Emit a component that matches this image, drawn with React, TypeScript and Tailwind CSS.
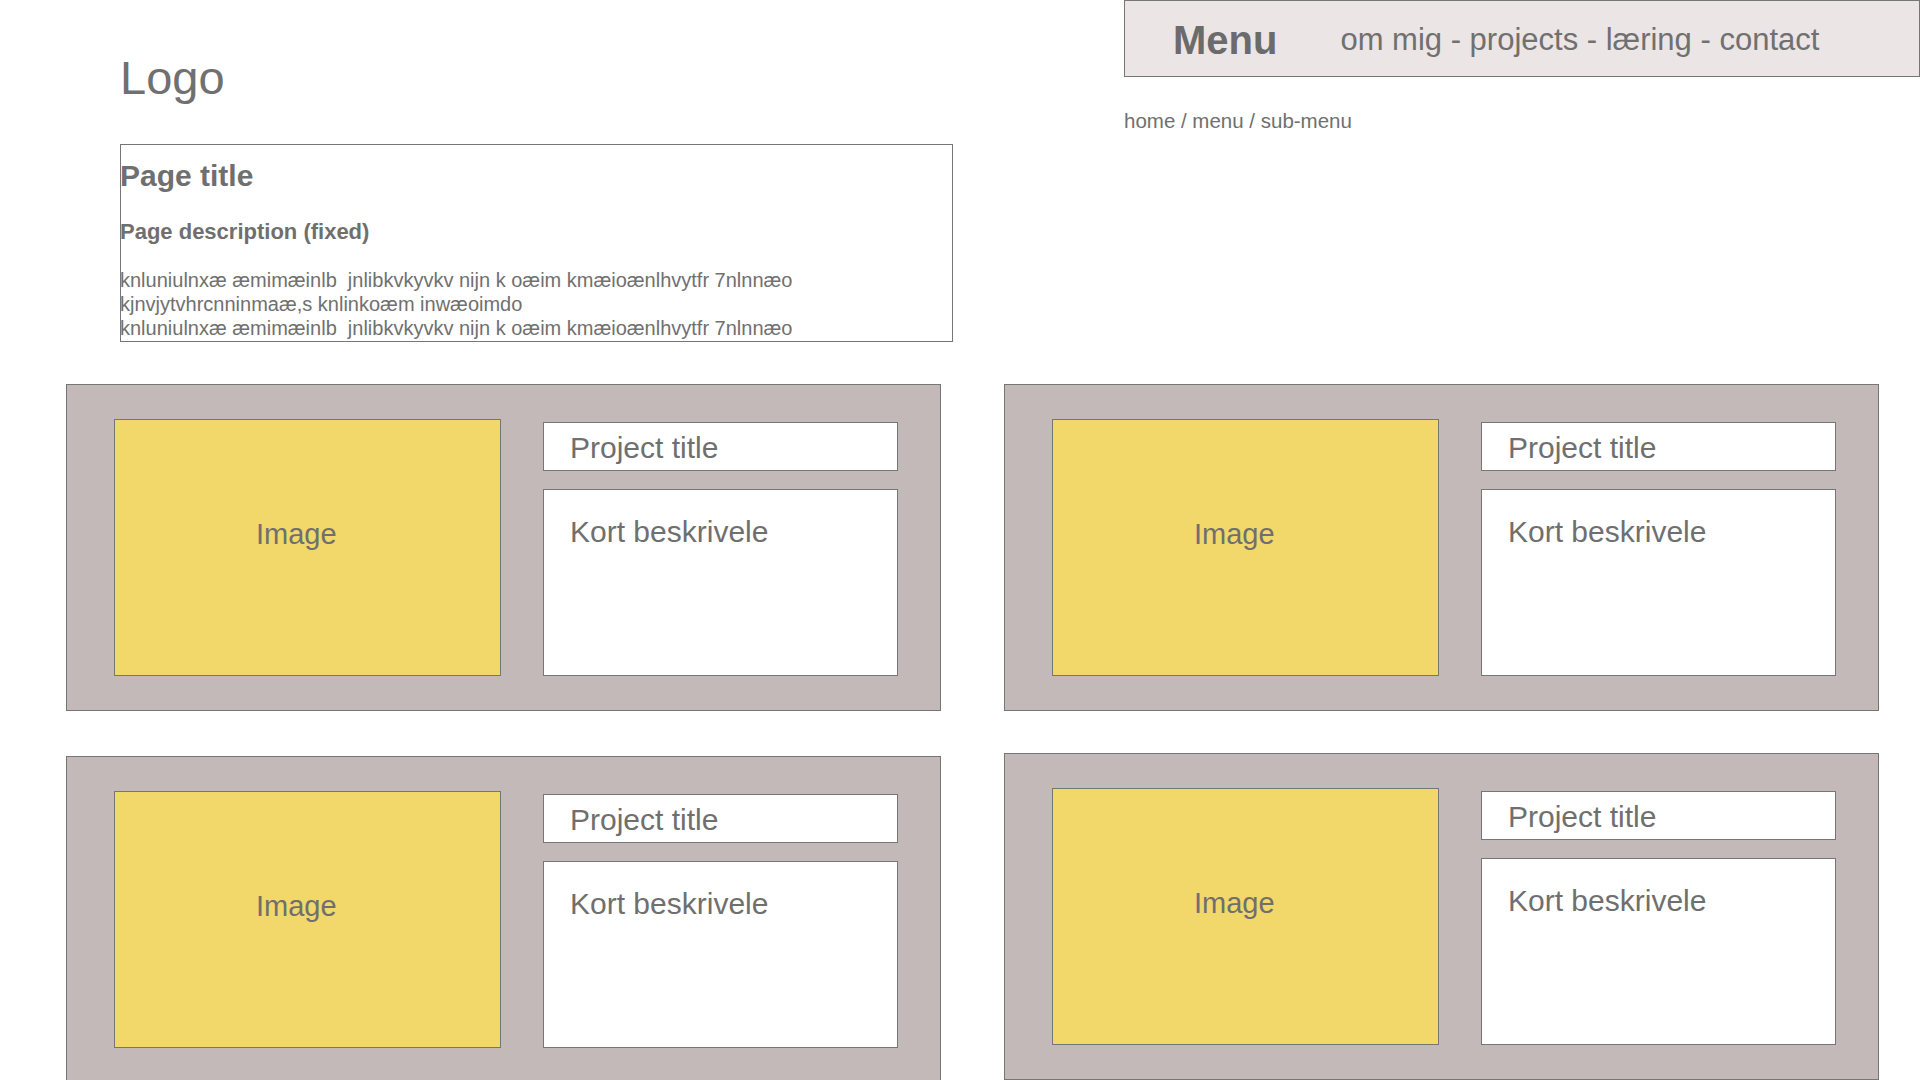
import React from "react";

const font = { fontFamily: '"Liberation Sans", Arial, Helvetica, sans-serif' };

function Card({ className = "" }: { className?: string }) {
  return (
    <div className={"flex w-[875px] h-[327px] border border-[#767676] bg-[#c2b9b8] pl-[47px] pt-[34px] pr-[42px] " + className}>
      <div className="w-[387px] h-[257px] shrink-0 border border-[#767676] bg-[#f2d86a] pl-[141px] pt-[100px]">
        <span className="block text-[29px] leading-[29px] text-[#6f6f6f]">Image</span>
      </div>
      <div className="ml-[42px] flex flex-col">
        <div className="mt-[3px] w-[355px] h-[49px] border border-[#767676] bg-white flex items-center pl-[26px] pt-[2px]">
          <span className="text-[30px] leading-[30px] text-[#6f6f6f]">Project title</span>
        </div>
        <div className="mt-[18px] w-[355px] h-[187px] border border-[#767676] bg-white pl-[26px] pt-[27px]">
          <span className="block text-[30px] leading-[30px] text-[#6f6f6f]">Kort beskrivele</span>
        </div>
      </div>
    </div>
  );
}

export default function App() {
  return (
    <div className="w-[1920px] h-[1080px] overflow-hidden bg-white text-[#707070]" style={font}>
      <div className="flex">
        <div className="w-[1124px] shrink-0 pl-[120px]">
          <div className="pt-[55px] text-[47px] leading-[46px] text-[#707070]">Logo</div>
          <div className="mt-[43px] w-[833px] h-[198px] border border-[#767676]">
            <div className="-ml-px">
              <div className="mt-[14px] text-[30px] leading-[34px] font-bold text-[#6f6f6f]">Page title</div>
              <div className="mt-[26px] text-[22px] leading-[26px] font-bold text-[#6f6f6f]">Page description (fixed)</div>
              <div className="mt-[23px] text-[20px] leading-[24px] text-[#707070] whitespace-pre">
                <div>knluniulnxæ æmimæinlb  jnlibkvkyvkv nijn k oæim kmæioænlhvytfr 7nlnnæo</div>
                <div>kjnvjytvhrcnninmaæ,s knlinkoæm inwæoimdo</div>
                <div>knluniulnxæ æmimæinlb  jnlibkvkyvkv nijn k oæim kmæioænlhvytfr 7nlnnæo</div>
              </div>
            </div>
          </div>
        </div>
        <div className="flex-1">
          <div className="h-[77px] border border-[#767676] bg-[#ebe5e5] flex items-center pl-[48px] pt-[2px]">
            <span className="text-[40px] leading-[40px] font-bold text-[#6b6b6b]">Menu</span>
            <span className="ml-[63px] text-[31px] leading-[31px] text-[#707070]">om mig - projects - læring - contact</span>
          </div>
          <div className="mt-[32px] text-[20.5px] leading-[24px] text-[#707070]">home / menu / sub-menu</div>
        </div>
      </div>
      <div className="mt-[42px] pl-[66px] flex gap-x-[63px]">
        <div className="flex flex-col gap-y-[45px]">
          <Card />
          <Card />
        </div>
        <div className="flex flex-col gap-y-[42px]">
          <Card />
          <Card />
        </div>
      </div>
    </div>
  );
}
